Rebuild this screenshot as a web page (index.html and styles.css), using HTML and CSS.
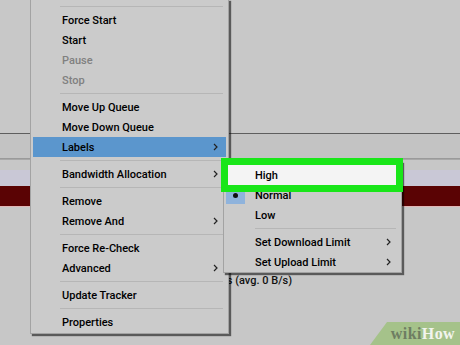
FILE: index.html
```html
<!DOCTYPE html>
<html lang="en">
<head>
    <meta charset="UTF-8">
    <title>Labels menu</title>
    <link rel="stylesheet" href="styles.css">
</head>
<body>
<div class="window">
    <div class="pane-top"></div>
    <div class="toolbar"></div>
    <div class="list">
        <div class="row gap"></div>
        <div class="row lav"></div>
        <div class="row sel"></div>
        <div class="row"></div>
    </div>
    <div class="status">Upload: 0 B/s (avg. 0 B/s)</div>
</div>

<!-- context menu -->
<div class="menu main-menu">
    <div class="sep"></div>
    <div class="item"><span class="check"></span><span class="label">Force Start</span></div>
    <div class="item"><span class="check"></span><span class="label">Start</span></div>
    <div class="item off"><span class="check"></span><span class="label">Pause</span></div>
    <div class="item off"><span class="check"></span><span class="label">Stop</span></div>
    <div class="sep"></div>
    <div class="item"><span class="check"></span><span class="label">Move Up Queue</span></div>
    <div class="item"><span class="check"></span><span class="label">Move Down Queue</span></div>
    <div class="item active"><span class="check"></span><span class="label">Labels</span>
        <svg class="arrow" width="5" height="8" viewBox="0 0 5 8"><polyline points="1,1 4,4 1,7" fill="none" stroke="#222" stroke-width="1.2"/></svg></div>
    <div class="sep"></div>
    <div class="item"><span class="check"></span><span class="label">Bandwidth Allocation</span>
        <svg class="arrow" width="5" height="8" viewBox="0 0 5 8"><polyline points="1,1 4,4 1,7" fill="none" stroke="#222" stroke-width="1.2"/></svg></div>
    <div class="sep"></div>
    <div class="item"><span class="check"></span><span class="label">Remove</span></div>
    <div class="item"><span class="check"></span><span class="label">Remove And</span>
        <svg class="arrow" width="5" height="8" viewBox="0 0 5 8"><polyline points="1,1 4,4 1,7" fill="none" stroke="#222" stroke-width="1.2"/></svg></div>
    <div class="sep"></div>
    <div class="item"><span class="check"></span><span class="label">Force Re-Check</span></div>
    <div class="item"><span class="check"></span><span class="label">Advanced</span>
        <svg class="arrow" width="5" height="8" viewBox="0 0 5 8"><polyline points="1,1 4,4 1,7" fill="none" stroke="#222" stroke-width="1.2"/></svg></div>
    <div class="sep"></div>
    <div class="item"><span class="check"></span><span class="label">Update Tracker</span></div>
    <div class="sep"></div>
    <div class="item"><span class="check"></span><span class="label">Properties</span></div>
</div>

<!-- submenu -->
<div class="menu sub-menu">
    <div class="item marked"><span class="check"></span><span class="label">High</span></div>
    <div class="item"><span class="check on"><i class="dot"></i></span><span class="label">Normal</span></div>
    <div class="item"><span class="check"></span><span class="label">Low</span></div>
    <div class="sep"></div>
    <div class="item"><span class="check"></span><span class="label">Set Download Limit</span>
        <svg class="arrow" width="5" height="8" viewBox="0 0 5 8"><polyline points="1,1 4,4 1,7" fill="none" stroke="#222" stroke-width="1.2"/></svg></div>
    <div class="item"><span class="check"></span><span class="label">Set Upload Limit</span>
        <svg class="arrow" width="5" height="8" viewBox="0 0 5 8"><polyline points="1,1 4,4 1,7" fill="none" stroke="#222" stroke-width="1.2"/></svg></div>
</div>

<div class="watermark"><span class="wiki">wiki</span><span class="how">How</span></div>
</body>
</html>
```

FILE: styles.css
```css
/* page */
body {
    margin: 0;
    width: 460px;
    height: 345px;
    overflow: hidden;
    position: relative;
    background: #c7c7c7;
    font-family: 'Roboto', 'Liberation Sans', sans-serif;
    font-size: 11px;
    font-weight: 500;
    color: #000;
}

/* window behind the menu */
.window {
    display: flex;
    flex-direction: column;
}

.pane-top {
    height: 133px;
    background: #c8c8c8;
    border-bottom: 1px solid #5e5e5e;
}

.toolbar {
    height: 24px;
    background: #c3c3c3;
    border-bottom: 1px solid #9a9a9a;
    box-shadow: 0 1px 0 #dedede;
}

.list {
    display: flex;
    flex-direction: column;
}

.row {
    height: 20px;
}

.row.gap {
    height: 10px;
    border-top: 1px solid #a8a8a8;
}

.row.lav {
    height: 16px;
    background: #c9c8d6;
}

.row.sel {
    background: #5a0304;
    border-bottom: 1px solid #e2b6b6;
}

.status {
    margin-top: 47px;
    width: 292px;
    text-align: right;
    white-space: nowrap;
    color: #111;
}

/* menus */
.menu {
    position: absolute;
    background: #cbcbcb;
    border: 1px solid #a3a3a3;
    box-shadow: 2px 2px 1px rgba(0, 0, 0, 0.55);
}

.main-menu {
    left: 30px;
    top: -1px;
    width: 193px;
    padding: 3px 2px 1px;
}

.sub-menu {
    left: 223px;
    top: 161px;
    width: 173px;
    padding: 3px 2px 0;
}

.item {
    height: 20px;
    display: flex;
    align-items: center;
    padding-right: 8px;
    white-space: nowrap;
}

.check {
    width: 19px;
    height: 18px;
    margin-right: 10px;
    display: flex;
    align-items: center;
    justify-content: center;
}

.check.on {
    background: #8fb3dc;
}

.dot {
    width: 5px;
    height: 5px;
    border-radius: 50%;
    background: #111;
}

.label {
    flex: 1;
}

.item.off {
    color: #808080;
}

.item.active {
    background: #5b96cd;
}

.item.marked {
    margin: 0 3px 0 2px;
    background: #f4f4f4;
    outline: 7px solid #19e619;
}

.item.marked .check {
    width: 17px;
}

.sep {
    height: 7px;
    display: flex;
    align-items: center;
    margin: 0 3px 0 27px;
}

.sep::before {
    content: '';
    flex: 1;
    border-top: 1px solid #b6b6b6;
}

.sub-menu .sep {
    margin-left: 29px;
}

/* watermark */
.watermark {
    position: absolute;
    right: 0;
    bottom: 0;
    width: 90px;
    height: 23px;
    background: #a5c28a;
    clip-path: polygon(17px 0, 100% 0, 100% 100%, 0 100%);
    display: flex;
    align-items: center;
    justify-content: flex-end;
    padding-right: 5px;
    box-sizing: border-box;
    font-family: 'Liberation Serif', serif;
    font-weight: bold;
    font-size: 16px;
    letter-spacing: 0.4px;
}

.wiki {
    color: #6e7d62;
}

.how {
    color: #f2f4ee;
}
```
